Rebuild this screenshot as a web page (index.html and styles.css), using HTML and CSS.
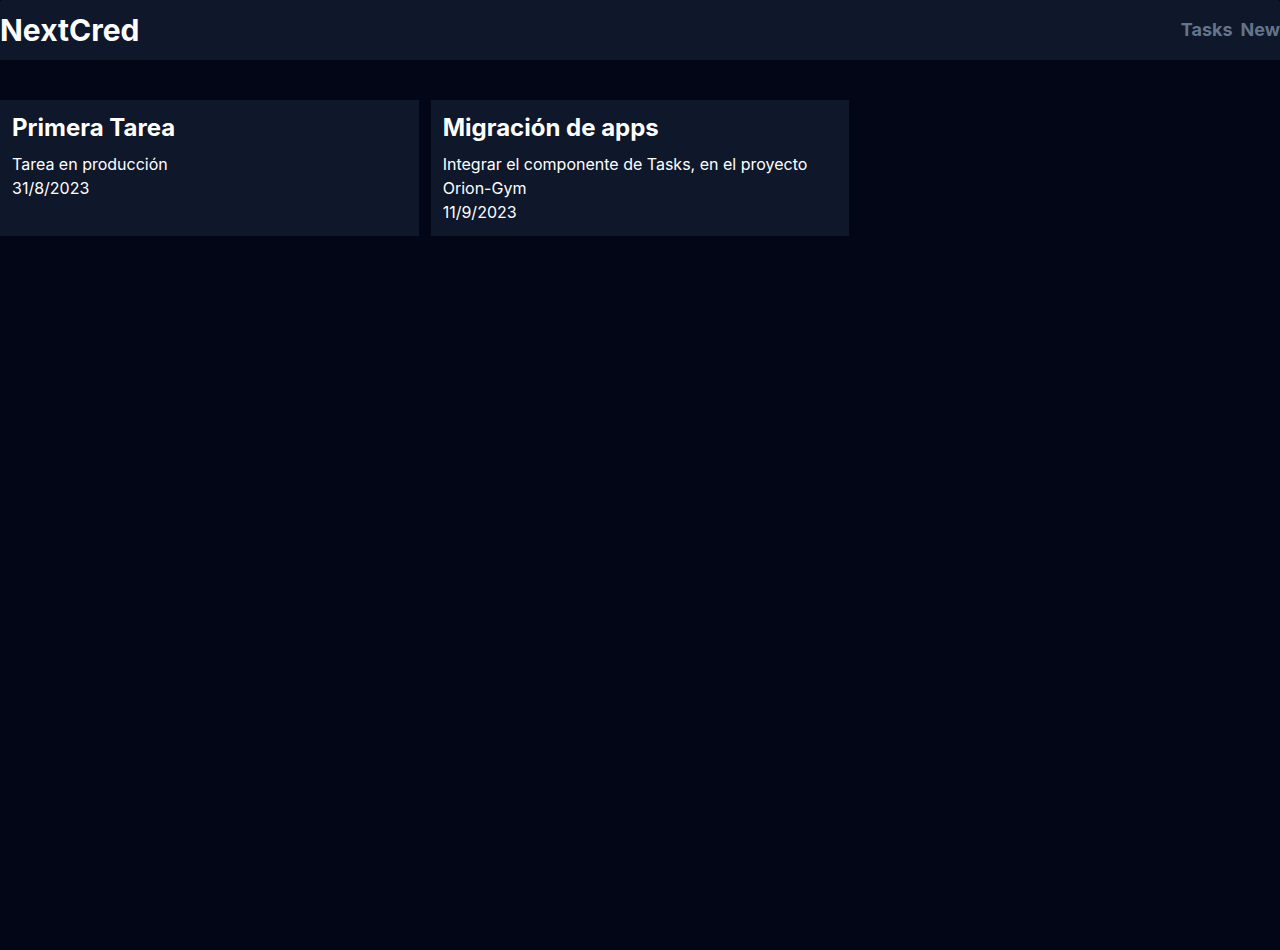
FILE: index.html
```html
<!DOCTYPE html>
<html lang="es">
<head>
<meta charset="utf-8">
<title>NextCred</title>
<link rel="stylesheet" href="styles.css">
</head>
<body>
<div class="page">
  <nav class="navbar">
    <h1 class="logo">NextCred</h1>
    <ul class="links">
      <li><a href="#">Tasks</a></li>
      <li><a href="#">New</a></li>
    </ul>
  </nav>
  <main class="grid">
    <div class="card">
      <h3 class="card-title">Primera Tarea</h3>
      <p class="card-text">Tarea en producción</p>
      <p class="card-text">31/8/2023</p>
    </div>
    <div class="card">
      <h3 class="card-title">Migración de apps</h3>
      <p class="card-text">Integrar el componente de Tasks, en el proyecto Orion-Gym</p>
      <p class="card-text">11/9/2023</p>
    </div>
  </main>
</div>
</body>
</html>
```

FILE: styles.css
```css
* { box-sizing: border-box; }
html, body {
  margin: 0;
  padding: 0;
  background: #020617;
  height: 100%;
}
body {
  font-family: Inter, "Noto Sans", sans-serif;
  color: #ffffff;
  font-size: 16px;
  line-height: 24px;
}
.page {
  min-height: 100%;
  background: #020617;
}
.navbar {
  display: flex;
  justify-content: space-between;
  align-items: center;
  background: #0f172a;
  padding: 12px 0;
  border-radius: 3px 3px 0 0;
}
.logo {
  margin: 0;
  font-size: 30px;
  line-height: 36px;
  font-weight: 700;
}
.links {
  display: flex;
  gap: 8px;
  list-style: none;
  margin: 0;
  padding: 0;
}
.links a {
  color: #64748b;
  text-decoration: none;
  font-weight: 700;
  font-size: 18px;
  line-height: 28px;
}
.grid {
  display: grid;
  grid-template-columns: repeat(3, 1fr);
  gap: 12px;
  margin-top: 40px;
}
.card {
  background: #0f172a;
  padding: 12px;
}
.card-title {
  margin: 0 0 8px;
  font-size: 24px;
  line-height: 32px;
  font-weight: 700;
}
.card-text {
  margin: 0;
}
```
